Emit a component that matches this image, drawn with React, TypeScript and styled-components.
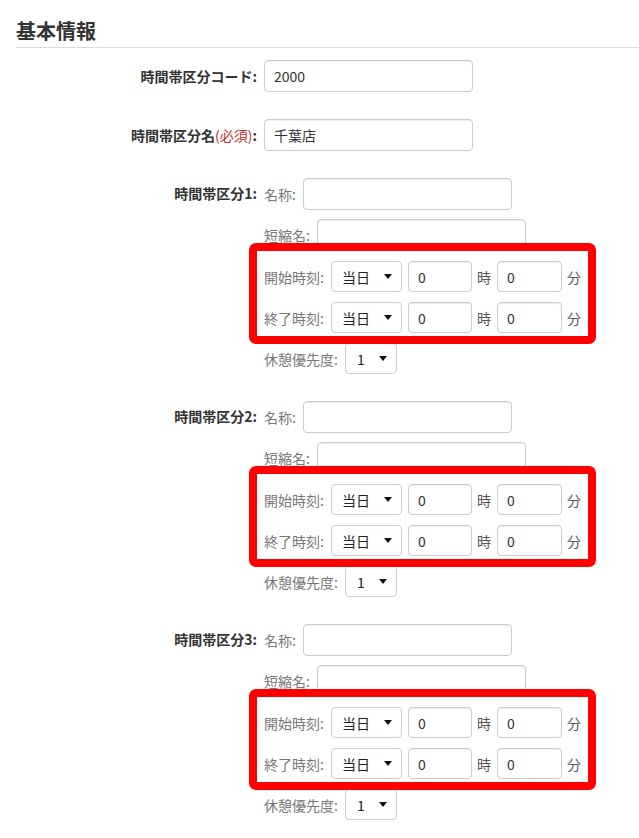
import React from "react";
import styled, { createGlobalStyle } from "styled-components";

const GlobalStyle = createGlobalStyle`
  html, body {
    margin: 0;
    padding: 0;
    background: #fff;
  }
  body {
    font-family: "Noto Sans CJK JP", "Noto Sans", sans-serif;
    font-size: 14px;
    color: #333;
  }
  *, *::before, *::after { box-sizing: border-box; }
`;

const Page = styled.div`
  padding: 17px 0 0 16px;
`;

const Heading = styled.h2`
  margin: 0;
  font-size: 20px;
  font-weight: 700;
  line-height: 28px;
  padding-bottom: 2px;
  border-bottom: 1px solid #ddd;
  color: #333;
`;

const Form = styled.form`
  margin-top: 12px;
  display: flex;
  flex-direction: column;
  gap: 27px;
`;

const FormRow = styled.div`
  display: grid;
  grid-template-columns: 241px 1fr;
  column-gap: 7px;
  align-items: start;
`;

const RowLabel = styled.label<{ $h?: number }>`
  text-align: right;
  font-weight: 700;
  color: #333;
  line-height: ${(p) => p.$h ?? 32}px;
  white-space: nowrap;
`;

const Required = styled.span`
  color: #c9302c;
  font-weight: 400;
`;

const TextInput = styled.input<{ $w?: number; $h?: number }>`
  width: ${(p) => p.$w ?? 209}px;
  height: ${(p) => p.$h ?? 32}px;
  border: 1px solid #ccc;
  border-radius: 4px;
  box-shadow: inset 0 1px 1px rgba(0, 0, 0, 0.075);
  padding: 0 9px;
  font-family: inherit;
  font-size: 14px;
  color: #333;
  background: #fff;
  outline: none;
`;

const FieldStack = styled.div`
  display: flex;
  flex-direction: column;
  gap: 10px;
`;

const SubRow = styled.div<{ $h?: number }>`
  display: flex;
  align-items: center;
  height: ${(p) => p.$h ?? 31}px;
`;

const SubLabel = styled.span`
  color: #777;
  margin-right: 7px;
  white-space: nowrap;
`;

const Unit = styled.span`
  color: #555;
  margin: 0 6px 0 5px;
`;

const TimeGroup = styled.div`
  position: relative;
  display: flex;
  flex-direction: column;
  gap: 10px;

  /* red highlight frame around the start / end time rows */
  &::after {
    content: "";
    position: absolute;
    left: -15px;
    top: -18px;
    width: 347px;
    height: 101px;
    border: 8px solid #ff0000;
    border-radius: 7px;
    pointer-events: none;
  }
`;

const SelectBox = styled.div<{ $w: number; $pl: number }>`
  width: ${(p) => p.$w}px;
  height: 31px;
  border: 1px solid #ccc;
  border-radius: 4px;
  background: #fff;
  display: flex;
  align-items: center;
  justify-content: space-between;
  padding: 0 9px 0 ${(p) => p.$pl}px;
  color: #222;
  font-size: 14px;
`;

const Caret = () => (
  <svg width="8" height="5" viewBox="0 0 8 5">
    <path d="M0 0 H8 L4 5 Z" fill="#111" />
  </svg>
);

const Select = ({ value, w, pl }: { value: string; w: number; pl: number }) => (
  <SelectBox $w={w} $pl={pl}>
    <span>{value}</span>
    <Caret />
  </SelectBox>
);

const TimeRow = ({ label }: { label: string }) => (
  <SubRow>
    <SubLabel>{label}</SubLabel>
    <Select value="当日" w={71} pl={10} />
    <TextInput $w={64} $h={31} defaultValue="0" style={{ marginLeft: 6 }} />
    <Unit>時</Unit>
    <TextInput $w={65} $h={31} defaultValue="0" />
    <Unit>分</Unit>
  </SubRow>
);

const Division = ({ n }: { n: number }) => (
  <FormRow>
    <RowLabel $h={31}>時間帯区分{n}:</RowLabel>
    <FieldStack>
      <SubRow>
        <SubLabel>名称:</SubLabel>
        <TextInput $h={32} />
      </SubRow>
      <SubRow $h={32}>
        <SubLabel>短縮名:</SubLabel>
        <TextInput $h={32} />
      </SubRow>
      <TimeGroup>
        <TimeRow label="開始時刻:" />
        <TimeRow label="終了時刻:" />
      </TimeGroup>
      <SubRow>
        <SubLabel>休憩優先度:</SubLabel>
        <Select value="1" w={52} pl={11} />
      </SubRow>
    </FieldStack>
  </FormRow>
);

export default function App() {
  return (
    <>
      <GlobalStyle />
      <Page>
        <Heading>基本情報</Heading>
        <Form onSubmit={(e) => e.preventDefault()}>
          <FormRow>
            <RowLabel>時間帯区分コード:</RowLabel>
            <TextInput defaultValue="2000" />
          </FormRow>
          <FormRow>
            <RowLabel>
              時間帯区分名<Required>(必須)</Required>:
            </RowLabel>
            <TextInput defaultValue="千葉店" />
          </FormRow>
          {[1, 2, 3].map((n) => (
            <Division key={n} n={n} />
          ))}
        </Form>
      </Page>
    </>
  );
}
